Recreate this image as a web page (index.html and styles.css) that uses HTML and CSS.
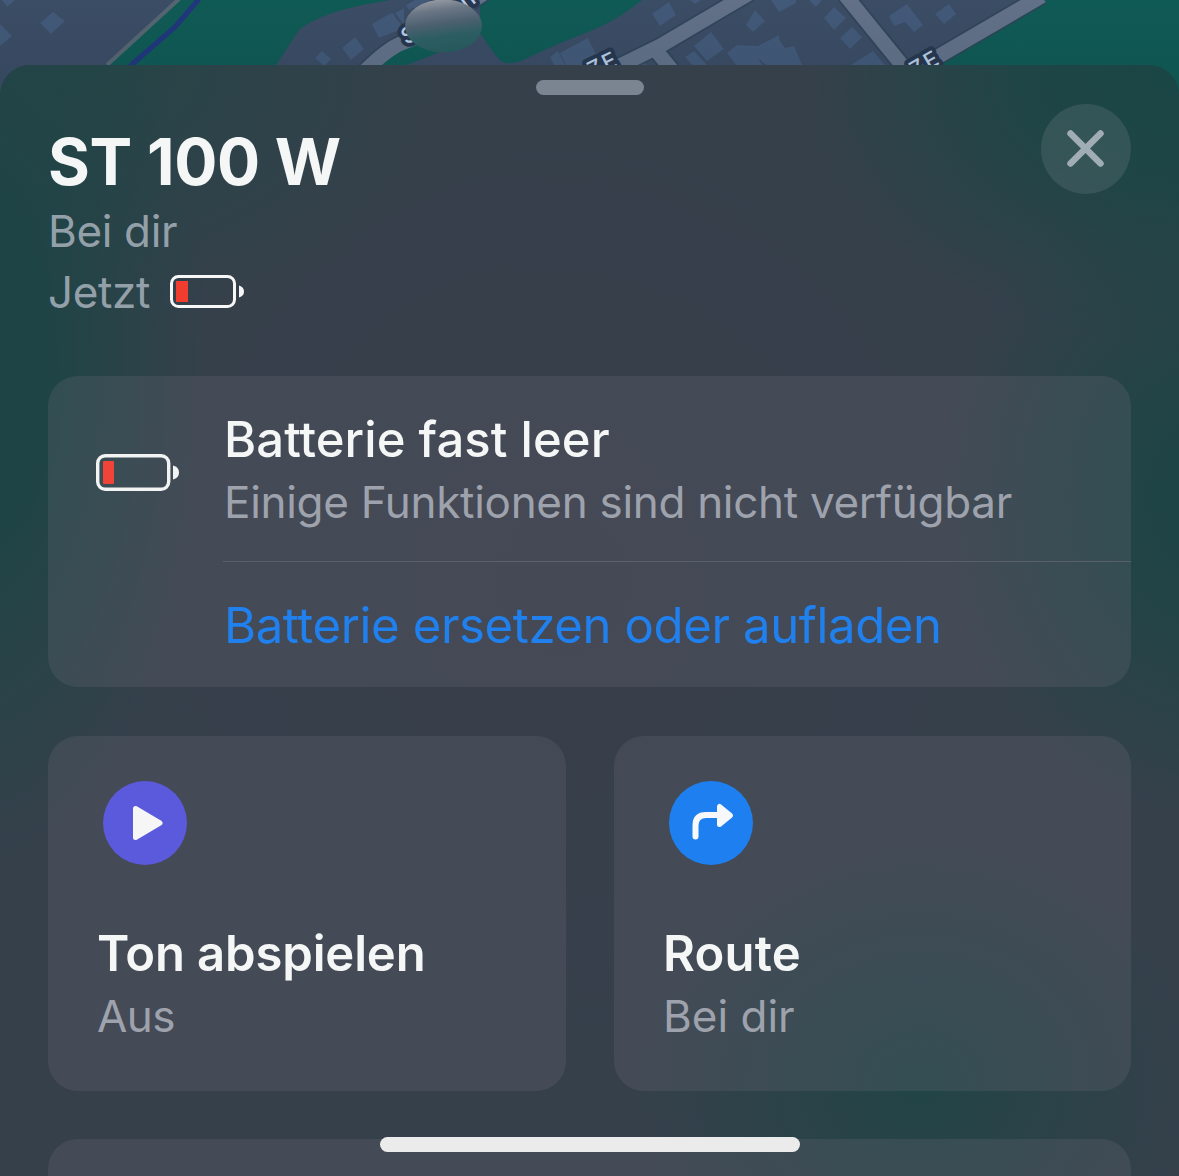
FILE: index.html
```html
<!DOCTYPE html>
<html lang="de">
<head>
<meta charset="utf-8">
<title>ST 100 W</title>
<link rel="stylesheet" href="styles.css">
</head>
<body>
<div class="screen">
  <svg class="map" viewBox="0 0 1179 110" aria-hidden="true">
    <defs>
      <linearGradient id="lens" x1="0.4" y1="0" x2="0.6" y2="1">
        <stop offset="0" stop-color="#969ba3"/><stop offset=".2" stop-color="#6b7685"/>
        <stop offset=".45" stop-color="#4c6070"/><stop offset=".7" stop-color="#2b5d62"/><stop offset="1" stop-color="#26585b"/>
      </linearGradient>
      <linearGradient id="shade" x1="0" y1="0" x2="0" y2="1">
        <stop offset="0" stop-color="#06202a" stop-opacity="0"/><stop offset="1" stop-color="#06202a" stop-opacity=".12"/>
      </linearGradient>
    </defs>
    <rect width="1179" height="110" fill="#3b4c65"/>
    <path fill="#105a55" d="M180 0H390L368 4Q320 13 299 30L276 65H107Z"/>
    <path fill="#105a55" d="M480 0H642Q615 22 588 32L558 44 523 60Q509 66 501 61L493 52 480 33Z"/>
    <path fill="#105a55" d="M1042 0H1179V110H1130L928 66Z"/>
    <path d="M179-1L107 65" stroke="#566572" stroke-width="4"/>
    <path d="M199-1L175 27 129 67" fill="none" stroke="#20377c" stroke-width="5"/>
    <g fill="#425979">
      <path d="M40 23L53 12 65 21 51 34ZM0 24L12 36 0 46ZM2 0H15L7 7ZM342 48L355 37 364 49 351 60ZM315 58L322 51 331 59 324 66ZM372 24L391 13 400 23 402 29 379 38Z"/>
      <path d="M380 20L393 13 402 29 380 37ZM395 13L404 8V25ZM406 5L415 0H430L409 10ZM550 57L558 51 565 65H554ZM560 53L588 38 601 65H566ZM652 14L669 2 676 15 660 26ZM690 0H701L695 4ZM746 25L755 10 765 21 753 32ZM771 0H796V3L779 12ZM694 46L711 32 724 49 707 61ZM685 57L694 51 707 65H692ZM727 53L737 45 758 46 779 35V39L785 48 794 46 802 65H766L758 58 762 65H736Z"/>
      <path d="M809 0H822L816 7ZM824 18L834 7 846 18 834 30ZM840 38L852 27 862 37 850 49ZM889 16L907 4 923 25 914 32 905 22 894 26ZM935 14L949 4 956 14 944 24ZM851 65L873 51 885 65ZM630 65L642 60 646 65Z"/>
    </g>
    <g fill="none" stroke="#2f4358" stroke-opacity=".8" stroke-width="18" stroke-linejoin="round">
      <path d="M365 71Q387 49 402 43L420 36 489-10M605 73L660 46 750-7M654 48L672 70M845-5L906 70M922 66L1042-4"/>
    </g>
    <path fill="#105a55" d="M378 65Q395 49 412 45H455L430 56 407 65Z"/>
    <g fill="none" stroke="#627188" stroke-width="14.500" stroke-linejoin="round">
      <path d="M365 71Q387 49 402 43L420 36 489-10M605 73L660 46 750-7M654 48L672 70M845-5L906 70M922 66L1042-4"/>
    </g>
    <g class="street">
      <text transform="translate(466 10) rotate(-36)">IF</text>
      <text transform="translate(406 45) rotate(-28)">S</text>
      <text transform="translate(592 78) rotate(-26)">ZE</text>
      <text transform="translate(915 78) rotate(-30)">ZE</text>
    </g>
    <rect width="1179" height="110" fill="url(#shade)"/>
    <ellipse cx="443.500" cy="26" rx="38.500" ry="26.500" fill="url(#lens)"/>
  </svg>

  <main class="sheet">
    <div class="grabber"></div>
    <header class="header">
      <div class="identity">
        <h1 class="title">ST 100 W</h1>
        <p class="secondary place">Bei dir</p>
        <p class="secondary status"><span class="now">Jetzt</span>
          <svg class="battery-small" viewBox="0 0 74 33"><rect x="1.500" y="1.500" width="63" height="30" rx="7" fill="none" stroke="#f7f7f7" stroke-width="3"/><rect x="6" y="6" width="12" height="21" fill="#f13c30"/><path d="M69 10.500Q74 12 74 16.500T69 22.500Z" fill="#f7f7f7"/></svg>
        </p>
      </div>
      <button class="close" aria-label="Schließen">
        <svg viewBox="0 0 90 90"><path d="M29.500 29.500L59.500 59.500M59.500 29.500L29.500 59.500" stroke="#a0adb4" stroke-width="6.500" stroke-linecap="round"/></svg>
      </button>
    </header>

    <section class="card alert">
      <svg class="battery-large" viewBox="0 0 84 37"><rect x="1.700" y="1.700" width="71" height="33.600" rx="7.500" fill="none" stroke="#f2f4f4" stroke-width="3.400"/><rect x="7" y="7" width="11" height="23" rx="1" fill="#f04438"/><path d="M77 11.500Q83 13 83 18.500T77 25.500Z" fill="#f2f4f4"/></svg>
      <div class="alert-body">
        <div class="alert-copy">
          <h2 class="alert-title">Batterie fast leer</h2>
          <p class="secondary alert-detail">Einige Funktionen sind nicht verfügbar</p>
        </div>
        <a class="alert-link"><span>Batterie ersetzen oder aufladen</span></a>
      </div>
    </section>

    <div class="actions">
      <section class="card action">
        <svg class="action-icon" viewBox="0 0 84 84"><circle cx="42" cy="42" r="42" fill="#5b59dc"/><path d="M32.500 27.500V56.500L57 42Z" fill="#f6f6f6" stroke="#f6f6f6" stroke-width="5" stroke-linejoin="round"/></svg>
        <h2 class="action-title sound">Ton abspielen</h2>
        <p class="secondary off">Aus</p>
      </section>
      <section class="card action">
        <svg class="action-icon" viewBox="0 0 84 84"><circle cx="42" cy="42" r="42" fill="#1e80f0"/><path d="M26.500 55.500V44.500Q26.500 34 37 34H51" fill="none" stroke="#f6f8fa" stroke-width="6" stroke-linecap="round"/><path d="M50.500 25.500V43.500L61.500 34.500Z" fill="#f6f8fa" stroke="#f6f8fa" stroke-width="5" stroke-linejoin="round"/></svg>
        <h2 class="action-title">Route</h2>
        <p class="secondary">Bei dir</p>
      </section>
    </div>

    <section class="card next"></section>
  </main>
  <div class="home-indicator"></div>
</div>
</body>
</html>
```
FILE: styles.css
```css
* { box-sizing: border-box; margin: 0; }

body {
  font-family: Inter, "Liberation Sans", sans-serif;
  background: #36404b;
}

.screen {
  position: relative;
  width: 1179px;
  height: 1176px;
  overflow: hidden;
}

.map {
  display: block;
  width: 1179px;
  height: 110px;
}

.street {
  font-size: 22px;
  font-weight: 500;
  letter-spacing: 2px;
  fill: #b9cbe3;
  stroke: #27374f;
  stroke-width: 8px;
  stroke-linejoin: round;
  paint-order: stroke;
}

/* The sheet overlaps the lower edge of the map. */
.sheet {
  position: relative;
  margin-top: -45px;
  height: 1111px;
  padding: 15px 48px 0;
  border-radius: 30px 30px 0 0;
  overflow: hidden;
  display: flex;
  flex-direction: column;
  background:
    radial-gradient(ellipse 240px 500px at -30px 310px, #1c4545 0%, rgba(28, 69, 69, .85) 35%, rgba(28, 69, 69, 0) 100%),
    radial-gradient(ellipse 350px 260px at 100px 0, rgba(32, 70, 69, .75) 0%, rgba(32, 70, 69, 0) 100%),
    radial-gradient(ellipse 380px 270px at 1179px 10px, #1a4645 0%, rgba(27, 70, 69, .85) 40%, rgba(27, 70, 69, 0) 100%),
    radial-gradient(ellipse 270px 330px at 1210px 430px, #1d4545 0%, rgba(29, 69, 69, .75) 40%, rgba(29, 69, 69, 0) 100%),
    radial-gradient(ellipse 290px 250px at 920px 1020px, rgba(30, 69, 70, .85) 0%, rgba(30, 69, 70, .5) 40%, rgba(30, 69, 70, 0) 100%),
    radial-gradient(ellipse 420px 460px at 560px 520px, #383e4a 0%, rgba(56, 62, 74, 0) 100%),
    #36404b;
}

.grabber {
  align-self: center;
  width: 108px;
  height: 15px;
  border-radius: 8px;
  background: #7b8491;
}

.header {
  display: flex;
  justify-content: space-between;
  height: 281px;
  padding-top: 9px;
}

.identity { padding-top: 20px; }

.title {
  font-size: 64px;
  line-height: 76.5px;
  font-weight: 700;
  letter-spacing: -.3px;
  color: #f5f6f6;
  white-space: nowrap;
}

.secondary {
  font-size: 44px;
  line-height: 61px;
  color: #9ea2ad;
  white-space: nowrap;
}

.header .secondary { color: #93a0a9; }

.place, .now { letter-spacing: -.35px; }

.status {
  display: flex;
  align-items: center;
  gap: 20px;
}

.battery-small {
  width: 74px;
  height: 33px;
  margin-bottom: 2px;
}

.close {
  width: 90px;
  height: 90px;
  padding: 0;
  border: 0;
  border-radius: 50%;
  background: rgba(150, 155, 165, .19);
}

.close svg { display: block; width: 90px; height: 90px; }

.card {
  border-radius: 30px;
  background: rgba(118, 112, 126, .22);
}

.alert {
  display: flex;
  height: 311px;
  flex: none;
}

.battery-large {
  width: 84px;
  height: 37px;
  margin: 78px 43px 0 48px;
}

.alert-body {
  flex: 1;
  display: flex;
  flex-direction: column;
}

.alert-copy {
  height: 186px;
  padding: 32px 0 0 1px;
  border-bottom: 1px solid #596069;
}

.alert-title {
  font-size: 49px;
  line-height: 64px;
  font-weight: 500;
  letter-spacing: .06px;
  color: #f5f6f6;
  white-space: nowrap;
}

.alert-detail { letter-spacing: -.3px; }

.alert-link {
  flex: 1;
  display: flex;
  align-items: center;
  padding: 2px 0 0 1px;
  font-size: 49px;
  letter-spacing: -.36px;
  color: #2080ee;
  white-space: nowrap;
}

.actions {
  display: grid;
  grid-template-columns: 518px 517px;
  column-gap: 48px;
  margin: 48.5px 0 48px;
}

.action {
  height: 355.5px;
  padding: 45.5px 49px 0;
}

.action-icon {
  display: block;
  width: 84px;
  height: 84px;
  margin: 0 0 57px 6px;
}

.action-title {
  font-size: 49px;
  line-height: 64px;
  font-weight: 600;
  letter-spacing: .2px;
  color: #f5f6f6;
  white-space: nowrap;
}

.action-title.sound { letter-spacing: -.15px; }

.off { letter-spacing: -.6px; }

.next {
  flex: 1;
  border-radius: 30px 30px 0 0;
}

.home-indicator {
  position: absolute;
  left: 380px;
  top: 1137px;
  width: 420px;
  height: 15px;
  border-radius: 8px;
  background: #ebebeb;
}
```
